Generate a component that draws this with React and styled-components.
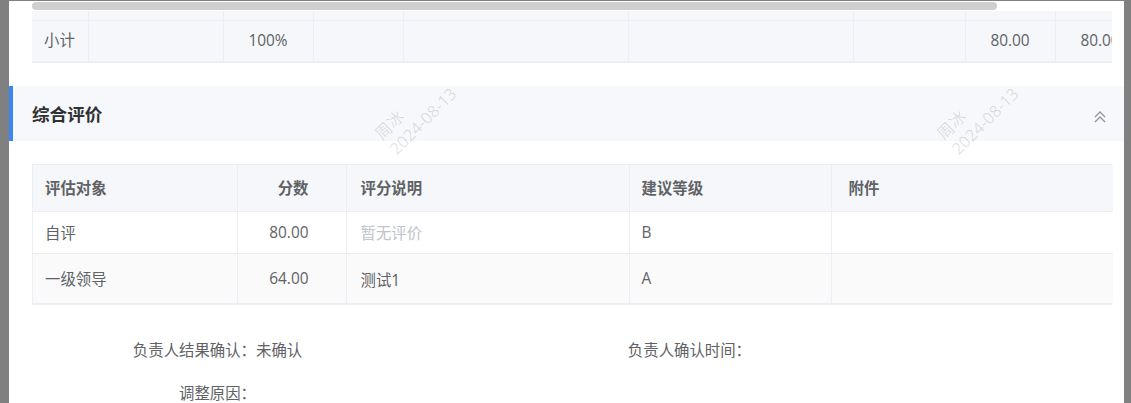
import React from "react";
import styled, { createGlobalStyle } from "styled-components";

const GlobalStyle = createGlobalStyle`
  html, body {
    margin: 0;
    padding: 0;
    background: #808080;
  }
  body {
    font-family: "Open Sans", "Noto Sans CJK SC", sans-serif;
    font-size: 15.4px;
    color: #606266;
    overflow: hidden;
  }
  * {
    box-sizing: border-box;
  }
`;

const Page = styled.div`
  height: 403px;
  padding: 1px 7px 0 9px;
  overflow: hidden;
`;

const Panel = styled.div`
  position: relative;
  height: 402px;
  background: #fff;
  padding: 0 12px 0 23px;
  overflow: hidden;
`;

/* ---------- top (scrolled) table ---------- */

const ScrollBox = styled.div`
  position: relative;
  z-index: 2;
  width: 1080px;
  overflow: hidden;
  background: #fff;
`;

const ScrollTrack = styled.div`
  height: 10px;
  padding-top: 1px;
`;

const ScrollThumb = styled.div`
  height: 8px;
  border-radius: 4px;
  background: #cfcfcf;
`;

const Table = styled.table`
  table-layout: fixed;
  border-collapse: collapse;
  width: ${(p) => p.$width}px;
`;

const SumCell = styled.td`
  height: ${(p) => p.$h}px;
  padding: 0 12px;
  background: #f5f7fa;
  border-right: 1px solid #ebeef5;
  border-bottom: ${(p) => (p.$last ? 2 : 1)}px solid #ebeef5;
  text-align: ${(p) => p.$align || "left"};
  white-space: nowrap;
  overflow: hidden;
  color: #606266;
  line-height: 20px;
`;

/* ---------- section header ---------- */

const SectionHead = styled.div`
  display: flex;
  align-items: center;
  justify-content: space-between;
  height: 55px;
  margin: 23px -12px 0 -23px;
  padding: 0 17px 0 19px;
  background: #f7f8fb;
  border-left: 4px solid #3a86f6;
`;

const Title = styled.h3`
  margin: 0;
  font-size: 17.6px;
  font-weight: 700;
  color: #303133;
`;

const Collapse = styled.svg`
  width: 14px;
  height: 14px;
  margin-top: 6px;
  color: #909399;
`;

/* ---------- evaluation table ---------- */

const EvalWrap = styled.div`
  position: relative;
  z-index: 2;
  margin-top: 23px;
  background: #fff;
  border: 1px solid #ebeef5;
  border-bottom-width: 2px;
`;

const HeadCell = styled.th`
  height: 46px;
  padding: 0 ${(p) => p.$pr || 12}px 0 ${(p) => p.$pl || 12}px;
  background: #f5f7fa;
  border-right: 1px solid #ebeef5;
  border-bottom: 1px solid #ebeef5;
  text-align: ${(p) => p.$align || "left"};
  font-weight: 600;
  color: #606266;
  &:last-child {
    border-right: none;
  }
`;

const BodyRow = styled.tr`
  height: ${(p) => p.$h}px;
  background: ${(p) => (p.$striped ? "#fafafa" : "#fff")};
  &:last-child td {
    border-bottom: none;
  }
`;

const BodyCell = styled.td`
  padding: ${(p) => (p.$down ? "3px" : "0")} ${(p) => p.$pr || 12}px 0
    ${(p) => p.$pl || 12}px;
  border-right: 1px solid #ebeef5;
  border-bottom: 1px solid #ebeef5;
  text-align: ${(p) => p.$align || "left"};
  color: ${(p) => (p.$muted ? "#c0c4cc" : "#606266")};
  &:last-child {
    border-right: none;
  }
`;

/* ---------- form ---------- */

const Form = styled.div`
  display: grid;
  grid-template-columns: 495px 495px;
  margin-top: 24px;
`;

const FormItem = styled.div`
  display: flex;
  line-height: 43px;
  height: 43px;
`;

const Label = styled.span`
  width: 224px;
  text-align: right;
  color: #606266;
  white-space: nowrap;
`;

const Value = styled.span`
  color: #606266;
`;

/* ---------- watermark ---------- */

const Watermark = styled.div`
  position: absolute;
  z-index: 1;
  left: ${(p) => p.$x}px;
  top: ${(p) => p.$y}px;
  transform-origin: 0 0;
  transform: rotate(-45deg);
  font-size: 16.5px;
  line-height: 21px;
  color: rgba(0, 0, 0, 0.12);
  white-space: nowrap;
  pointer-events: none;
  user-select: none;
`;

const sumCols = [56, 135, 90, 90, 225, 225, 112, 90, 90];
const sumRow = [
  { t: "小计" },
  { t: "" },
  { t: "100%", a: "center" },
  { t: "" },
  { t: "" },
  { t: "" },
  { t: "" },
  { t: "80.00", a: "center" },
  { t: "80.00", a: "center" },
];

const evalCols = [204, 109, 283, 202, 282];
const evalRows = [
  { who: "自评", score: "80.00", note: "暂无评价", muted: true, level: "B", h: 42 },
  { who: "一级领导", score: "64.00", note: "测试1", level: "A", h: 50, striped: true },
];

const marks = [361, 923];

export default function App() {
  const tableWidth = sumCols.reduce((a, b) => a + b, 0);
  return (
    <>
      <GlobalStyle />
      <Page>
        <Panel>
          {marks.map((x) => (
            <Watermark key={x} $x={x} $y={128}>
              周冰
              <br />
              2024-08-13
            </Watermark>
          ))}

          <ScrollBox>
            <ScrollTrack>
              <ScrollThumb style={{ width: 965 }} />
            </ScrollTrack>
            <Table $width={tableWidth}>
              <colgroup>
                {sumCols.map((w, i) => (
                  <col key={i} style={{ width: w }} />
                ))}
              </colgroup>
              <tbody>
                <tr>
                  {sumCols.map((w, i) => (
                    <SumCell key={i} $h={9} />
                  ))}
                </tr>
                <tr>
                  {sumRow.map((c, i) => (
                    <SumCell key={i} $h={42} $last $align={c.a}>
                      {c.t}
                    </SumCell>
                  ))}
                </tr>
              </tbody>
            </Table>
          </ScrollBox>

          <SectionHead>
            <Title>综合评价</Title>
            <Collapse viewBox="0 0 14 14" fill="none" stroke="currentColor" strokeWidth="1.3">
              <polyline points="2,7 7,2 12,7" />
              <polyline points="2,12 7,7 12,12" />
            </Collapse>
          </SectionHead>

          <EvalWrap>
            <Table $width={1078}>
              <colgroup>
                {evalCols.map((w, i) => (
                  <col key={i} style={{ width: w }} />
                ))}
              </colgroup>
              <thead>
                <tr>
                  <HeadCell>评估对象</HeadCell>
                  <HeadCell $align="right" $pr={37}>
                    分数
                  </HeadCell>
                  <HeadCell $pl={14}>评分说明</HeadCell>
                  <HeadCell>建议等级</HeadCell>
                  <HeadCell $pl={17}>附件</HeadCell>
                </tr>
              </thead>
              <tbody>
                {evalRows.map((r) => (
                  <BodyRow key={r.who} $h={r.h} $striped={r.striped}>
                    <BodyCell>{r.who}</BodyCell>
                    <BodyCell $align="right" $pr={37}>
                      {r.score}
                    </BodyCell>
                    <BodyCell $pl={14} $muted={r.muted} $down={!r.muted}>
                      {r.note}
                    </BodyCell>
                    <BodyCell>{r.level}</BodyCell>
                    <BodyCell $pl={17} />
                  </BodyRow>
                ))}
              </tbody>
            </Table>
          </EvalWrap>

          <Form>
            <FormItem>
              <Label>负责人结果确认：</Label>
              <Value>未确认</Value>
            </FormItem>
            <FormItem>
              <Label>负责人确认时间：</Label>
              <Value />
            </FormItem>
            <FormItem>
              <Label>调整原因：</Label>
              <Value />
            </FormItem>
          </Form>
        </Panel>
      </Page>
    </>
  );
}
